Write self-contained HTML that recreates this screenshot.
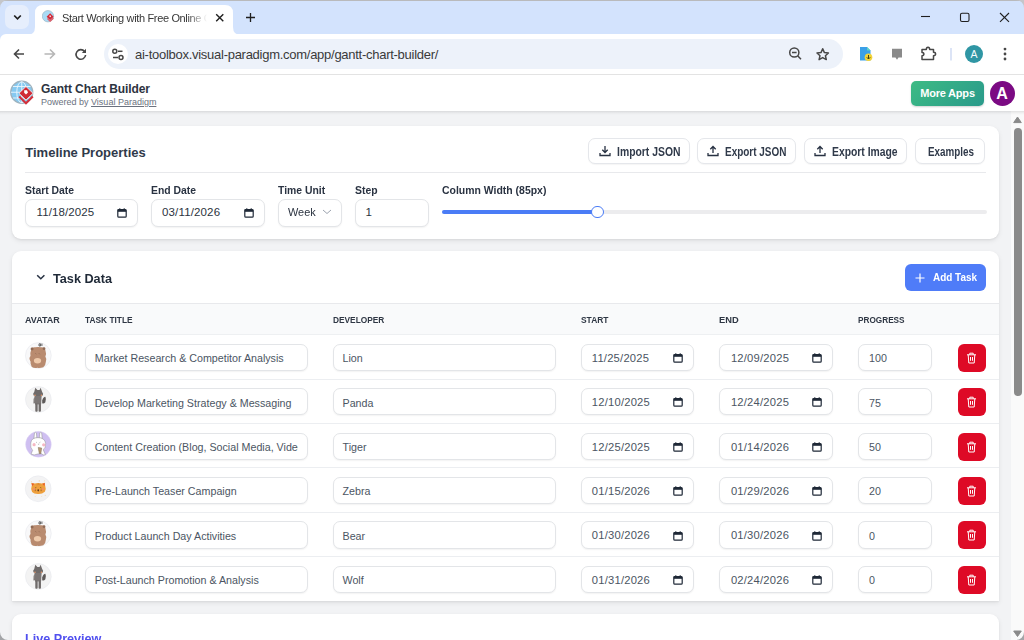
<!DOCTYPE html>
<html><head><meta charset="utf-8">
<style>
*{box-sizing:border-box;margin:0;padding:0}
html,body{width:1024px;height:640px;overflow:hidden;background:#fff;font-family:"Liberation Sans",sans-serif}
.abs{position:absolute}
#tabbar{position:absolute;left:0;top:0;width:1024px;height:35px;background:#d3e3fd;border-top:1px solid #b9babc}
#toolbar{position:absolute;left:0;top:34px;width:1024px;height:41px;background:#fff;border-bottom:1px solid #e3e3e3}
#omni{position:absolute;left:104px;top:39px;width:739px;height:30px;border-radius:15px;background:#edf2fa}
#apphdr{position:absolute;left:0;top:75px;width:1024px;height:36px;background:#fff}
#page{position:absolute;left:0;top:112px;width:1011px;height:528px;background:#f2f3f5;overflow:hidden}
#sb{position:absolute;left:1011px;top:112px;width:13px;height:528px;background:#fafafa}
.card{position:absolute;left:12px;width:987px;background:#fff;border-radius:9px;box-shadow:0 2px 5px rgba(0,0,0,.08),0 1px 2px rgba(0,0,0,.05)}
.lbl{position:absolute;font-size:11px;font-weight:bold;color:#1f2937}
.inp{position:absolute;height:28px;border:1px solid #e5e7eb;border-radius:6px;background:#fff;font-size:11.5px;color:#374151}
.btn{position:absolute;top:138px;height:26px;border:1px solid #e5e7eb;border-radius:7px;background:#fff;font-size:12px;font-weight:bold;color:#1f2937}
.th{position:absolute;top:316px;font-size:9.5px;font-weight:bold;color:#374151}
.row{position:absolute;left:12px;width:987px;border-top:1px solid #e5e7eb}
.ti{position:absolute;height:27px;border:1px solid #e5e7eb;border-radius:6px;background:#fff;font-size:10.5px;color:#4b5563}
</style></head>
<body>

<div id="tabbar"></div>
<div class="abs" style="left:5px;top:5px;width:24px;height:24px;border-radius:7px;background:#e6eefc"></div>
<svg class="abs" style="left:0;top:0" width="1024" height="75">
  <path d="M14.2 15.5 L17.5 18.8 L20.8 15.5" fill="none" stroke="#1f1f1f" stroke-width="1.7"/>
  <!-- tab shape -->
  <path d="M27 35 Q35 35 35 27 L35 13 Q35 5 43 5 L225 5 Q233 5 233 13 L233 27 Q233 35 241 35 Z" fill="#fff"/>
  <path d="M216.2 14.2 L223.3 21.3 M223.3 14.2 L216.2 21.3" stroke="#1f1f1f" stroke-width="1.4"/>
  <path d="M250.5 13 V22 M246 17.5 H255" stroke="#1f1f1f" stroke-width="1.3"/>
  <path d="M921 16.5 H930" stroke="#1f1f1f" stroke-width="1.1"/>
  <rect x="960.5" y="13.2" width="8.5" height="8.3" rx="1.5" fill="none" stroke="#1f1f1f" stroke-width="1.1"/>
  <path d="M1000 13 L1009 21.8 M1009 13 L1000 21.8" stroke="#1f1f1f" stroke-width="1.1"/>
</svg>
<svg class="abs" style="left:41.5px;top:10px" width="13" height="13" viewBox="0 0 24 24">
  <circle cx="11" cy="11.5" r="10.5" fill="#a9dbf5" stroke="#9db4c2" stroke-width="1.2"/>
  <path d="M10 15.5 L15 20.5 L21 15" fill="none" stroke="#e0606b" stroke-width="2.6"/>
  <path d="M15 6 L21.5 12.3 L15 18.5 L8.5 12.3 Z" fill="#d42a38"/>
  <path d="M13.7 10 H16 L16.6 12 L15 13.5 L13.7 12.2 Z" fill="#fff"/>
</svg>
<div class="abs" style="left:62px;top:11.5px;width:145px;height:16px;overflow:hidden;font-size:11px;letter-spacing:-0.35px;color:#363636;white-space:nowrap;-webkit-mask-image:linear-gradient(90deg,#000 125px,transparent 145px)">Start Working with Free Online Gantt</div>
<div id="toolbar"></div>
<div id="omni"></div>
<div class="abs" style="left:108px;top:44px;width:20px;height:20px;border-radius:10px;background:#fff"></div>
<svg class="abs" style="left:0;top:34px" width="1024" height="41">
  <path d="M24 20 H14.8 M19 15.5 L14.5 20 L19 24.5" fill="none" stroke="#474747" stroke-width="1.6"/>
  <path d="M44.5 20 H53.7 M50 15.5 L54.5 20 L50 24.5" fill="none" stroke="#b7b7b7" stroke-width="1.6"/>
  <path d="M84.6 17.5 A4.8 4.8 0 1 0 85.6 21" fill="none" stroke="#474747" stroke-width="1.6"/>
  <path d="M86 14.8 V19 H81.8 Z" fill="#474747"/>
  <g fill="none" stroke="#474747" stroke-width="1.5">
    <circle cx="114.8" cy="17.3" r="2"/><path d="M118 17.3 H122.5"/>
    <circle cx="121" cy="23.5" r="2"/><path d="M113 23.5 H118"/>
    <circle cx="794.3" cy="18.5" r="4.6"/><path d="M797.6 21.8 L801 25.3"/><path d="M792 18.5 H796.6"/>
    <path d="M822.7 14.8 L824.4 18.6 L828.4 19 L825.4 21.7 L826.3 25.6 L822.7 23.6 L819.1 25.6 L820 21.7 L817 19 L821 18.6 Z" stroke-linejoin="round"/>
    <path d="M922 15.5 H926.3 Q926.3 13.2 928 13.2 Q929.7 13.2 929.7 15.5 H933.5 V18.3 Q935.6 18.3 935.6 20 Q935.6 21.7 933.5 21.7 V25.5 H922 V21.8 Q923.9 21.8 923.9 20.1 Q923.9 18.4 922 18.4 Z" stroke-linejoin="round"/>
  </g>
  <path d="M951 14 V26.5" stroke="#c9d6f2" stroke-width="1.3"/>
  <path d="M892 14.7 H902 V23.5 H898.5 L897 25.7 L895.5 23.5 H892 Z" fill="#8a8a8a"/>
  <path d="M860 13 H867 L870.5 16.5 V26.5 H860 Z" fill="#3aa0e8"/>
  <path d="M867 13 L870.5 16.5 H867 Z" fill="#5fd3c4"/>
  <circle cx="868.5" cy="23.3" r="3.8" fill="#f2d43a"/>
  <path d="M868.5 21 V24.8 M866.8 23.3 L868.5 25 L870.2 23.3" stroke="#3d3a10" stroke-width="1" fill="none"/>
  <circle cx="974" cy="20" r="9" fill="#2f96a4"/>
  <text x="974" y="23.8" font-size="10.5" fill="#f4fbfc" text-anchor="middle" font-family="Liberation Sans">A</text>
  <circle cx="1005" cy="15.1" r="1.4" fill="#474747"/><circle cx="1005" cy="20" r="1.4" fill="#474747"/><circle cx="1005" cy="25" r="1.4" fill="#474747"/>
</svg>
<div class="abs" style="left:135px;top:46.6px;font-size:13px;letter-spacing:-0.27px;color:#3a3a3a;white-space:nowrap">ai-toolbox.visual-paradigm.com/app/gantt-chart-builder/</div>
<div id="apphdr"></div>
<svg class="abs" style="left:0;top:75px" width="40" height="36">
  <circle cx="21.75" cy="17.25" r="11" fill="#86c9f1" stroke="#9fb3bf" stroke-width="1.3"/>
  <g stroke="#eaf6fd" stroke-width="0.9" fill="none">
    <ellipse cx="21.75" cy="17.25" rx="5" ry="10.5"/>
    <path d="M11 17.25 H32.5 M13 11.5 H30.5 M13 23 H30.5 M21.75 6.5 V28"/>
  </g>
  <path d="M19.2 21.5 L26 28.2 L32.8 21.5" fill="none" stroke="#d2303c" stroke-width="2.2"/>
  <path d="M26 11.5 L33 18.3 L26 25 L19 18.3 Z" fill="#cf2a36" stroke="#fff" stroke-width="0.7"/>
  <path d="M24.2 15.2 H27 L28 17.5 L26 19.5 L24.2 17.8 Z" fill="#fff"/>
</svg>
<div class="abs" style="left:41px;top:81.6px;font-size:12px;font-weight:bold;color:#2d3340;white-space:nowrap;letter-spacing:-0.1px">Gantt Chart Builder</div>
<div class="abs" style="left:41px;top:96.5px;font-size:9px;color:#6b7280;white-space:nowrap">Powered by <span style="text-decoration:underline">Visual Paradigm</span></div>
<div class="abs" style="left:911px;top:81px;width:73px;height:25px;border-radius:5px;background:linear-gradient(135deg,#3dbb84,#2a9a8b);box-shadow:0 1px 2px rgba(0,0,0,.18);color:#fff;font-size:11px;font-weight:bold;line-height:25px;text-align:center;letter-spacing:-0.2px">More Apps</div>
<div class="abs" style="left:989.5px;top:80.7px;width:25px;height:25px;border-radius:50%;background:#7b0a83;color:#fff;font-size:16px;font-weight:bold;line-height:26px;text-align:center">A</div>
<div class="abs" style="left:0;top:111px;width:1011px;height:529px;background:#f2f3f5"></div>
<div class="abs" style="left:0;top:111px;width:1024px;height:4px;background:linear-gradient(rgba(0,0,0,.10),rgba(0,0,0,.035) 50%,rgba(0,0,0,0))"></div>
<div class="card" style="top:126px;height:113px"></div>
<div class="card" style="top:251px;height:350px;border-radius:9px 9px 0 0"></div>
<div class="card" style="top:614px;height:100px"></div>
<div class="abs" style="left:25.3px;top:145.24px;font-size:13px;line-height:normal;font-weight:bold;color:#303a4a;white-space:nowrap;">Timeline Properties</div>
<div class="abs" style="left:25px;top:172px;width:961px;height:1px;background:#e8e9ec"></div>
<div class="abs" style="left:588px;top:137.5px;width:102.0px;height:26.5px;border:1px solid #e5e7eb;border-radius:7px;background:#fff;box-shadow:0 1px 1px rgba(0,0,0,.04)"></div>
<div class="abs" style="left:696.6px;top:137.5px;width:99.4px;height:26.5px;border:1px solid #e5e7eb;border-radius:7px;background:#fff;box-shadow:0 1px 1px rgba(0,0,0,.04)"></div>
<div class="abs" style="left:803.5px;top:137.5px;width:103.9px;height:26.5px;border:1px solid #e5e7eb;border-radius:7px;background:#fff;box-shadow:0 1px 1px rgba(0,0,0,.04)"></div>
<div class="abs" style="left:914.6px;top:137.5px;width:70.6px;height:26.5px;border:1px solid #e5e7eb;border-radius:7px;background:#fff;box-shadow:0 1px 1px rgba(0,0,0,.04)"></div>
<div class="abs" style="left:616.5px;top:144.94px;font-size:12px;line-height:normal;font-weight:bold;color:#303a4a;white-space:nowrap;transform:scaleX(0.866);transform-origin:0 0;">Import JSON</div>
<div class="abs" style="left:725px;top:144.94px;font-size:12px;line-height:normal;font-weight:bold;color:#303a4a;white-space:nowrap;transform:scaleX(0.83);transform-origin:0 0;">Export JSON</div>
<div class="abs" style="left:832px;top:144.94px;font-size:12px;line-height:normal;font-weight:bold;color:#303a4a;white-space:nowrap;transform:scaleX(0.863);transform-origin:0 0;">Export Image</div>
<div class="abs" style="left:927.5px;top:144.94px;font-size:12px;line-height:normal;font-weight:bold;color:#303a4a;white-space:nowrap;transform:scaleX(0.82);transform-origin:0 0;">Examples</div>
<svg class="abs" style="left:598.5px;top:145px" width="12" height="12" viewBox="0 0 12 12"><path d="M6 1 V7.5 M3.3 4.8 L6 7.5 L8.7 4.8 M1 8 V10.5 H11 V8" fill="none" stroke="#273142" stroke-width="1.3"/></svg>
<svg class="abs" style="left:707px;top:145px" width="12" height="12" viewBox="0 0 12 12"><path d="M6 8 V1.5 M3.3 4.2 L6 1.5 L8.7 4.2 M1 8 V10.5 H11 V8" fill="none" stroke="#273142" stroke-width="1.3"/></svg>
<svg class="abs" style="left:814px;top:145px" width="12" height="12" viewBox="0 0 12 12"><path d="M6 8 V1.5 M3.3 4.2 L6 1.5 L8.7 4.2 M1 8 V10.5 H11 V8" fill="none" stroke="#273142" stroke-width="1.3"/></svg>
<div class="abs" style="left:25px;top:184.04px;font-size:11px;line-height:normal;font-weight:bold;color:#2a3342;white-space:nowrap;transform:scaleX(0.945);transform-origin:0 0;">Start Date</div>
<div class="abs" style="left:151.3px;top:184.04px;font-size:11px;line-height:normal;font-weight:bold;color:#2a3342;white-space:nowrap;transform:scaleX(0.945);transform-origin:0 0;">End Date</div>
<div class="abs" style="left:277.8px;top:184.04px;font-size:11px;line-height:normal;font-weight:bold;color:#2a3342;white-space:nowrap;transform:scaleX(0.945);transform-origin:0 0;">Time Unit</div>
<div class="abs" style="left:355.2px;top:184.04px;font-size:11px;line-height:normal;font-weight:bold;color:#2a3342;white-space:nowrap;transform:scaleX(0.945);transform-origin:0 0;">Step</div>
<div class="abs" style="left:442px;top:184.04px;font-size:11px;line-height:normal;font-weight:bold;color:#2a3342;white-space:nowrap;transform:scaleX(0.95);transform-origin:0 0;">Column Width (85px)</div>
<div class="abs" style="left:25.3px;top:198.8px;width:113.20px;height:27.80px;border:1px solid #e3e5e8;border-radius:7px;background:#fff;box-shadow:0 1px 1.5px rgba(0,0,0,.05)"></div>
<div class="abs" style="left:36.6px;top:206.19px;font-size:11.5px;line-height:normal;font-weight:normal;color:#2b3340;white-space:nowrap;letter-spacing:0.1px;">11/18/2025</div>
<svg class="abs" style="left:117px;top:207.5px" width="10" height="10" viewBox="0 0 10 10"><rect x="0.8" y="1.5" width="8.4" height="7.7" rx="1" fill="none" stroke="#1f2937" stroke-width="1.2"/><rect x="0.8" y="1.5" width="8.4" height="2.3" fill="#1f2937"/><path d="M2.8 0.2 V1.8 M7.2 0.2 V1.8" stroke="#1f2937" stroke-width="1.1"/></svg>
<div class="abs" style="left:151.1px;top:198.8px;width:114.30px;height:27.80px;border:1px solid #e3e5e8;border-radius:7px;background:#fff;box-shadow:0 1px 1.5px rgba(0,0,0,.05)"></div>
<div class="abs" style="left:162px;top:206.19px;font-size:11.5px;line-height:normal;font-weight:normal;color:#2b3340;white-space:nowrap;letter-spacing:0.15px;">03/11/2026</div>
<svg class="abs" style="left:243.5px;top:207.5px" width="10" height="10" viewBox="0 0 10 10"><rect x="0.8" y="1.5" width="8.4" height="7.7" rx="1" fill="none" stroke="#1f2937" stroke-width="1.2"/><rect x="0.8" y="1.5" width="8.4" height="2.3" fill="#1f2937"/><path d="M2.8 0.2 V1.8 M7.2 0.2 V1.8" stroke="#1f2937" stroke-width="1.1"/></svg>
<div class="abs" style="left:277.7px;top:198.8px;width:64.50px;height:27.80px;border:1px solid #e3e5e8;border-radius:7px;background:#fff;box-shadow:0 1px 1.5px rgba(0,0,0,.05)"></div>
<div class="abs" style="left:288px;top:206.19px;font-size:11.5px;line-height:normal;font-weight:normal;color:#2b3340;white-space:nowrap;transform:scaleX(0.95);transform-origin:0 0;">Week</div>
<svg class="abs" style="left:322px;top:209px" width="10" height="6"><path d="M1 1 L5 4.5 L9 1" fill="none" stroke="#9ca3af" stroke-width="1"/></svg>
<div class="abs" style="left:355.4px;top:198.8px;width:74.10px;height:27.80px;border:1px solid #e3e5e8;border-radius:7px;background:#fff;box-shadow:0 1px 1.5px rgba(0,0,0,.05)"></div>
<div class="abs" style="left:365.6px;top:206.19px;font-size:11.5px;line-height:normal;font-weight:normal;color:#2b3340;white-space:nowrap;">1</div>
<div class="abs" style="left:441.5px;top:210.3px;width:545px;height:4px;border-radius:2px;background:#ececee"></div>
<div class="abs" style="left:441.5px;top:210.3px;width:156px;height:4px;border-radius:2px;background:#4a7cf6"></div>
<div class="abs" style="left:591.3px;top:206.1px;width:12.4px;height:12.4px;border-radius:50%;background:#fff;border:1.8px solid #4a7cf6"></div>
<svg class="abs" style="left:36px;top:274px" width="10" height="7"><path d="M1.2 1.2 L4.8 4.8 L8.4 1.2" fill="none" stroke="#273142" stroke-width="1.5"/></svg>
<div class="abs" style="left:53.1px;top:270.74px;font-size:13px;line-height:normal;font-weight:bold;color:#1f2937;white-space:nowrap;transform:scaleX(0.975);transform-origin:0 0;">Task Data</div>
<div class="abs" style="left:905.4px;top:264px;width:80.8px;height:27px;border-radius:6px;background:#4f7cf8"></div>
<svg class="abs" style="left:915px;top:272.5px" width="10" height="10"><path d="M5 0.5 V9.5 M0.5 5 H9.5" stroke="#fff" stroke-width="1.2"/></svg>
<div class="abs" style="left:933.2px;top:271.09px;font-size:11.5px;line-height:normal;font-weight:bold;color:#fff;white-space:nowrap;transform:scaleX(0.865);transform-origin:0 0;">Add Task</div>
<div class="abs" style="left:12px;top:303px;width:987px;height:31.5px;background:#f9fafb;border-top:1px solid #e8e9ec;border-bottom:1px solid #eef0f2"></div>
<div class="abs" style="left:25px;top:314.20px;font-size:9.5px;line-height:normal;font-weight:bold;color:#2f3744;white-space:nowrap;transform:scaleX(0.946);transform-origin:0 0;">AVATAR</div>
<div class="abs" style="left:85.2px;top:314.20px;font-size:9.5px;line-height:normal;font-weight:bold;color:#2f3744;white-space:nowrap;transform:scaleX(0.878);transform-origin:0 0;">TASK TITLE</div>
<div class="abs" style="left:332.5px;top:314.20px;font-size:9.5px;line-height:normal;font-weight:bold;color:#2f3744;white-space:nowrap;transform:scaleX(0.875);transform-origin:0 0;">DEVELOPER</div>
<div class="abs" style="left:580.5px;top:314.20px;font-size:9.5px;line-height:normal;font-weight:bold;color:#2f3744;white-space:nowrap;transform:scaleX(0.887);transform-origin:0 0;">START</div>
<div class="abs" style="left:719.3px;top:314.20px;font-size:9.5px;line-height:normal;font-weight:bold;color:#2f3744;white-space:nowrap;transform:scaleX(0.98);transform-origin:0 0;">END</div>
<div class="abs" style="left:858.1px;top:314.20px;font-size:9.5px;line-height:normal;font-weight:bold;color:#2f3744;white-space:nowrap;transform:scaleX(0.865);transform-origin:0 0;">PROGRESS</div>
<svg class="abs" style="left:22px;top:338.20px" width="34" height="34" viewBox="0 0 640 640"><circle cx="308" cy="330" r="243" fill="#f8f8f9" stroke="#e2e4e9" stroke-width="9"/>
<path d="M175 215 Q180 170 250 175 Q300 165 360 175 Q430 170 440 230 Q465 300 440 350 Q470 400 450 440 Q445 520 400 550 Q330 575 290 560 Q230 575 185 545 Q155 500 160 440 Q120 380 160 340 Q150 270 175 215 Z" fill="#b98b6f"/>
<circle cx="190" cy="205" r="28" fill="#8f6a55"/><circle cx="415" cy="200" r="26" fill="#8f6a55"/>
<ellipse cx="292" cy="430" rx="68" ry="52" fill="#efcaab"/>
<path d="M255 290 L268 305 M320 290 L333 305" stroke="#6b4c3b" stroke-width="10"/>
<path d="M320 110 H350 V150 H320 Z M375 105 V150" stroke="#333" stroke-width="14" fill="none"/></svg>
<div class="abs" style="left:84.5px;top:343.60px;width:223px;height:27.30px;border:1px solid #e3e5e8;border-radius:7px;background:#fff;box-shadow:0 1px 1.5px rgba(0,0,0,.05);overflow:hidden"></div>
<div class="abs" style="left:85.5px;top:343.60px;width:212px;height:27.30px;overflow:hidden"><div class="abs" style="left:9.3px;top:8.52px;font-size:10.7px;color:#4b5563;white-space:nowrap">Market Research &amp; Competitor Analysis</div></div>
<div class="abs" style="left:332.5px;top:343.6px;width:223.10px;height:27.30px;border:1px solid #e3e5e8;border-radius:7px;background:#fff;box-shadow:0 1px 1.5px rgba(0,0,0,.05)"></div>
<div class="abs" style="left:342.5px;top:352.12px;font-size:10.7px;line-height:normal;font-weight:normal;color:#4b5563;white-space:nowrap;">Lion</div>
<div class="abs" style="left:580.5px;top:343.6px;width:113.40px;height:27.30px;border:1px solid #e3e5e8;border-radius:7px;background:#fff;box-shadow:0 1px 1.5px rgba(0,0,0,.05)"></div>
<div class="abs" style="left:591.8px;top:351.66px;font-size:11.2px;line-height:normal;font-weight:normal;color:#4b5563;white-space:nowrap;letter-spacing:0.22px;">11/25/2025</div>
<svg class="abs" style="left:672.5px;top:352.90000000000003px" width="10" height="10" viewBox="0 0 10 10"><rect x="0.8" y="1.5" width="8.4" height="7.7" rx="1" fill="none" stroke="#1f2937" stroke-width="1.2"/><rect x="0.8" y="1.5" width="8.4" height="2.3" fill="#1f2937"/><path d="M2.8 0.2 V1.8 M7.2 0.2 V1.8" stroke="#1f2937" stroke-width="1.1"/></svg>
<div class="abs" style="left:719.1px;top:343.6px;width:114.20px;height:27.30px;border:1px solid #e3e5e8;border-radius:7px;background:#fff;box-shadow:0 1px 1.5px rgba(0,0,0,.05)"></div>
<div class="abs" style="left:730.9px;top:351.66px;font-size:11.2px;line-height:normal;font-weight:normal;color:#4b5563;white-space:nowrap;letter-spacing:0.22px;">12/09/2025</div>
<svg class="abs" style="left:812px;top:352.90000000000003px" width="10" height="10" viewBox="0 0 10 10"><rect x="0.8" y="1.5" width="8.4" height="7.7" rx="1" fill="none" stroke="#1f2937" stroke-width="1.2"/><rect x="0.8" y="1.5" width="8.4" height="2.3" fill="#1f2937"/><path d="M2.8 0.2 V1.8 M7.2 0.2 V1.8" stroke="#1f2937" stroke-width="1.1"/></svg>
<div class="abs" style="left:858.1px;top:343.6px;width:73.90px;height:27.30px;border:1px solid #e3e5e8;border-radius:7px;background:#fff;box-shadow:0 1px 1.5px rgba(0,0,0,.05)"></div>
<div class="abs" style="left:869px;top:352.12px;font-size:10.7px;line-height:normal;font-weight:normal;color:#4b5563;white-space:nowrap;">100</div>
<div class="abs" style="left:957.5px;top:343.60px;width:28.3px;height:28px;border-radius:6px;background:#de0a26"></div>
<svg class="abs" style="left:966px;top:351.60px" width="11" height="12" viewBox="0 0 11 12"><path d="M1 2.8 H10 M3.8 2.8 V1.2 H7.2 V2.8 M2.2 2.8 L2.8 11 H8.2 L8.8 2.8 M4.5 5 V8.8 M6.5 5 V8.8" fill="none" stroke="#fff" stroke-width="1"/></svg>
<div class="abs" style="left:12px;top:378.55px;width:987px;height:1px;background:#eceef1"></div>
<svg class="abs" style="left:22px;top:382.65px" width="34" height="34" viewBox="0 0 640 640"><circle cx="308" cy="310" r="243" fill="#f3f3f3" stroke="#e4e6eb" stroke-width="9"/>
<path d="M230 170 L250 90 L290 130 L330 130 L350 90 L380 170 Q410 200 390 235 Q350 255 305 250 Q245 255 215 230 Q200 195 230 170 Z" fill="#6f6b6a"/>
<circle cx="245" cy="232" r="14" fill="#e99566"/><circle cx="365" cy="232" r="14" fill="#e99566"/>
<path d="M235 245 H370 L360 400 H245 Z" fill="#7b7675"/>
<path d="M218 300 L240 255 L245 380 L215 385 Z" fill="#7b7675"/>
<rect x="250" y="380" width="45" height="160" rx="18" fill="#6f6b6a"/>
<rect x="312" y="380" width="45" height="160" rx="18" fill="#6f6b6a"/>
<path d="M380 330 Q400 260 440 260 Q460 300 440 360 Q410 400 380 380 Z" fill="#5e5a59"/></svg>
<div class="abs" style="left:84.5px;top:388.05px;width:223px;height:27.30px;border:1px solid #e3e5e8;border-radius:7px;background:#fff;box-shadow:0 1px 1.5px rgba(0,0,0,.05);overflow:hidden"></div>
<div class="abs" style="left:85.5px;top:388.05px;width:212px;height:27.30px;overflow:hidden"><div class="abs" style="left:9.3px;top:8.52px;font-size:10.7px;color:#4b5563;white-space:nowrap">Develop Marketing Strategy &amp; Messaging</div></div>
<div class="abs" style="left:332.5px;top:388.05px;width:223.10px;height:27.30px;border:1px solid #e3e5e8;border-radius:7px;background:#fff;box-shadow:0 1px 1.5px rgba(0,0,0,.05)"></div>
<div class="abs" style="left:342.5px;top:396.57px;font-size:10.7px;line-height:normal;font-weight:normal;color:#4b5563;white-space:nowrap;">Panda</div>
<div class="abs" style="left:580.5px;top:388.05px;width:113.40px;height:27.30px;border:1px solid #e3e5e8;border-radius:7px;background:#fff;box-shadow:0 1px 1.5px rgba(0,0,0,.05)"></div>
<div class="abs" style="left:591.8px;top:396.11px;font-size:11.2px;line-height:normal;font-weight:normal;color:#4b5563;white-space:nowrap;letter-spacing:0.22px;">12/10/2025</div>
<svg class="abs" style="left:672.5px;top:397.35px" width="10" height="10" viewBox="0 0 10 10"><rect x="0.8" y="1.5" width="8.4" height="7.7" rx="1" fill="none" stroke="#1f2937" stroke-width="1.2"/><rect x="0.8" y="1.5" width="8.4" height="2.3" fill="#1f2937"/><path d="M2.8 0.2 V1.8 M7.2 0.2 V1.8" stroke="#1f2937" stroke-width="1.1"/></svg>
<div class="abs" style="left:719.1px;top:388.05px;width:114.20px;height:27.30px;border:1px solid #e3e5e8;border-radius:7px;background:#fff;box-shadow:0 1px 1.5px rgba(0,0,0,.05)"></div>
<div class="abs" style="left:730.9px;top:396.11px;font-size:11.2px;line-height:normal;font-weight:normal;color:#4b5563;white-space:nowrap;letter-spacing:0.22px;">12/24/2025</div>
<svg class="abs" style="left:812px;top:397.35px" width="10" height="10" viewBox="0 0 10 10"><rect x="0.8" y="1.5" width="8.4" height="7.7" rx="1" fill="none" stroke="#1f2937" stroke-width="1.2"/><rect x="0.8" y="1.5" width="8.4" height="2.3" fill="#1f2937"/><path d="M2.8 0.2 V1.8 M7.2 0.2 V1.8" stroke="#1f2937" stroke-width="1.1"/></svg>
<div class="abs" style="left:858.1px;top:388.05px;width:73.90px;height:27.30px;border:1px solid #e3e5e8;border-radius:7px;background:#fff;box-shadow:0 1px 1.5px rgba(0,0,0,.05)"></div>
<div class="abs" style="left:869px;top:396.57px;font-size:10.7px;line-height:normal;font-weight:normal;color:#4b5563;white-space:nowrap;">75</div>
<div class="abs" style="left:957.5px;top:388.05px;width:28.3px;height:28px;border-radius:6px;background:#de0a26"></div>
<svg class="abs" style="left:966px;top:396.05px" width="11" height="12" viewBox="0 0 11 12"><path d="M1 2.8 H10 M3.8 2.8 V1.2 H7.2 V2.8 M2.2 2.8 L2.8 11 H8.2 L8.8 2.8 M4.5 5 V8.8 M6.5 5 V8.8" fill="none" stroke="#fff" stroke-width="1"/></svg>
<div class="abs" style="left:12px;top:423.00px;width:987px;height:1px;background:#eceef1"></div>
<svg class="abs" style="left:22px;top:427.10px" width="34" height="34" viewBox="0 0 640 640"><circle cx="310" cy="325" r="243" fill="#cfbff1" stroke="#e6e0f5" stroke-width="6"/>
<path d="M225 215 L235 110 Q255 90 270 110 L280 210 Z M325 210 L335 110 Q350 90 370 110 L380 215 Z" fill="#fff" stroke="#8c8c8c" stroke-width="9"/>
<path d="M165 300 Q175 200 300 200 Q430 200 445 310 Q450 390 400 430 L440 520 Q400 540 360 500 L290 510 Q230 540 170 510 Q190 460 200 440 Q150 390 165 300 Z" fill="#fff" stroke="#8c8c8c" stroke-width="9"/>
<circle cx="228" cy="332" r="30" fill="#f6b8c3"/><circle cx="408" cy="335" r="30" fill="#f6b8c3"/>
<path d="M265 285 l15 8 M345 285 l-15 8 M300 320 q12 10 24 0" stroke="#555" stroke-width="8" fill="none"/>
<path d="M305 385 L370 395 L355 500 L325 500 Z" fill="#b89a72" stroke="#6d5b45" stroke-width="8"/></svg>
<div class="abs" style="left:84.5px;top:432.50px;width:223px;height:27.30px;border:1px solid #e3e5e8;border-radius:7px;background:#fff;box-shadow:0 1px 1.5px rgba(0,0,0,.05);overflow:hidden"></div>
<div class="abs" style="left:85.5px;top:432.50px;width:212px;height:27.30px;overflow:hidden"><div class="abs" style="left:9.3px;top:8.52px;font-size:10.7px;color:#4b5563;white-space:nowrap">Content Creation (Blog, Social Media, Videos)</div></div>
<div class="abs" style="left:332.5px;top:432.5px;width:223.10px;height:27.30px;border:1px solid #e3e5e8;border-radius:7px;background:#fff;box-shadow:0 1px 1.5px rgba(0,0,0,.05)"></div>
<div class="abs" style="left:342.5px;top:441.02px;font-size:10.7px;line-height:normal;font-weight:normal;color:#4b5563;white-space:nowrap;">Tiger</div>
<div class="abs" style="left:580.5px;top:432.5px;width:113.40px;height:27.30px;border:1px solid #e3e5e8;border-radius:7px;background:#fff;box-shadow:0 1px 1.5px rgba(0,0,0,.05)"></div>
<div class="abs" style="left:591.8px;top:440.56px;font-size:11.2px;line-height:normal;font-weight:normal;color:#4b5563;white-space:nowrap;letter-spacing:0.22px;">12/25/2025</div>
<svg class="abs" style="left:672.5px;top:441.8px" width="10" height="10" viewBox="0 0 10 10"><rect x="0.8" y="1.5" width="8.4" height="7.7" rx="1" fill="none" stroke="#1f2937" stroke-width="1.2"/><rect x="0.8" y="1.5" width="8.4" height="2.3" fill="#1f2937"/><path d="M2.8 0.2 V1.8 M7.2 0.2 V1.8" stroke="#1f2937" stroke-width="1.1"/></svg>
<div class="abs" style="left:719.1px;top:432.5px;width:114.20px;height:27.30px;border:1px solid #e3e5e8;border-radius:7px;background:#fff;box-shadow:0 1px 1.5px rgba(0,0,0,.05)"></div>
<div class="abs" style="left:730.9px;top:440.56px;font-size:11.2px;line-height:normal;font-weight:normal;color:#4b5563;white-space:nowrap;letter-spacing:0.22px;">01/14/2026</div>
<svg class="abs" style="left:812px;top:441.8px" width="10" height="10" viewBox="0 0 10 10"><rect x="0.8" y="1.5" width="8.4" height="7.7" rx="1" fill="none" stroke="#1f2937" stroke-width="1.2"/><rect x="0.8" y="1.5" width="8.4" height="2.3" fill="#1f2937"/><path d="M2.8 0.2 V1.8 M7.2 0.2 V1.8" stroke="#1f2937" stroke-width="1.1"/></svg>
<div class="abs" style="left:858.1px;top:432.5px;width:73.90px;height:27.30px;border:1px solid #e3e5e8;border-radius:7px;background:#fff;box-shadow:0 1px 1.5px rgba(0,0,0,.05)"></div>
<div class="abs" style="left:869px;top:441.02px;font-size:10.7px;line-height:normal;font-weight:normal;color:#4b5563;white-space:nowrap;">50</div>
<div class="abs" style="left:957.5px;top:432.50px;width:28.3px;height:28px;border-radius:6px;background:#de0a26"></div>
<svg class="abs" style="left:966px;top:440.50px" width="11" height="12" viewBox="0 0 11 12"><path d="M1 2.8 H10 M3.8 2.8 V1.2 H7.2 V2.8 M2.2 2.8 L2.8 11 H8.2 L8.8 2.8 M4.5 5 V8.8 M6.5 5 V8.8" fill="none" stroke="#fff" stroke-width="1"/></svg>
<div class="abs" style="left:12px;top:467.45px;width:987px;height:1px;background:#eceef1"></div>
<svg class="abs" style="left:22px;top:471.55px" width="34" height="34" viewBox="0 0 640 640"><circle cx="305" cy="315" r="243" fill="#f3f3f4" stroke="#e4e6eb" stroke-width="9"/>
<path d="M185 250 L175 200 L240 215 Q305 195 370 215 L430 200 L435 255 Q460 320 430 370 Q380 415 305 412 Q225 415 190 375 Q160 320 185 250 Z" fill="#efa03c"/>
<path d="M180 215 L230 220 L195 265 Z M432 212 L385 222 L420 265 Z" fill="#e8542e"/>
<path d="M285 215 V250 M310 210 V245 M335 215 V250" stroke="#c9782a" stroke-width="9"/>
<path d="M245 300 L270 290 M340 290 L365 300 M250 330 V360 M360 330 V360" stroke="#5a3a1e" stroke-width="10"/>
<ellipse cx="305" cy="345" rx="14" ry="20" fill="#4a2b16"/>
<circle cx="225" cy="325" r="20" fill="#f28b6b"/><circle cx="395" cy="325" r="20" fill="#f28b6b"/>
<path d="M175 175 l10 10 M325 155 v25 M425 160 l-5 15 M250 460 l10 -10 M370 460 l5 -10 M430 440 h15" stroke="#f1b24a" stroke-width="9"/></svg>
<div class="abs" style="left:84.5px;top:476.95px;width:223px;height:27.30px;border:1px solid #e3e5e8;border-radius:7px;background:#fff;box-shadow:0 1px 1.5px rgba(0,0,0,.05);overflow:hidden"></div>
<div class="abs" style="left:85.5px;top:476.95px;width:212px;height:27.30px;overflow:hidden"><div class="abs" style="left:9.3px;top:8.52px;font-size:10.7px;color:#4b5563;white-space:nowrap">Pre-Launch Teaser Campaign</div></div>
<div class="abs" style="left:332.5px;top:476.95000000000005px;width:223.10px;height:27.30px;border:1px solid #e3e5e8;border-radius:7px;background:#fff;box-shadow:0 1px 1.5px rgba(0,0,0,.05)"></div>
<div class="abs" style="left:342.5px;top:485.47px;font-size:10.7px;line-height:normal;font-weight:normal;color:#4b5563;white-space:nowrap;">Zebra</div>
<div class="abs" style="left:580.5px;top:476.95000000000005px;width:113.40px;height:27.30px;border:1px solid #e3e5e8;border-radius:7px;background:#fff;box-shadow:0 1px 1.5px rgba(0,0,0,.05)"></div>
<div class="abs" style="left:591.8px;top:485.01px;font-size:11.2px;line-height:normal;font-weight:normal;color:#4b5563;white-space:nowrap;letter-spacing:0.22px;">01/15/2026</div>
<svg class="abs" style="left:672.5px;top:486.25000000000006px" width="10" height="10" viewBox="0 0 10 10"><rect x="0.8" y="1.5" width="8.4" height="7.7" rx="1" fill="none" stroke="#1f2937" stroke-width="1.2"/><rect x="0.8" y="1.5" width="8.4" height="2.3" fill="#1f2937"/><path d="M2.8 0.2 V1.8 M7.2 0.2 V1.8" stroke="#1f2937" stroke-width="1.1"/></svg>
<div class="abs" style="left:719.1px;top:476.95000000000005px;width:114.20px;height:27.30px;border:1px solid #e3e5e8;border-radius:7px;background:#fff;box-shadow:0 1px 1.5px rgba(0,0,0,.05)"></div>
<div class="abs" style="left:730.9px;top:485.01px;font-size:11.2px;line-height:normal;font-weight:normal;color:#4b5563;white-space:nowrap;letter-spacing:0.22px;">01/29/2026</div>
<svg class="abs" style="left:812px;top:486.25000000000006px" width="10" height="10" viewBox="0 0 10 10"><rect x="0.8" y="1.5" width="8.4" height="7.7" rx="1" fill="none" stroke="#1f2937" stroke-width="1.2"/><rect x="0.8" y="1.5" width="8.4" height="2.3" fill="#1f2937"/><path d="M2.8 0.2 V1.8 M7.2 0.2 V1.8" stroke="#1f2937" stroke-width="1.1"/></svg>
<div class="abs" style="left:858.1px;top:476.95000000000005px;width:73.90px;height:27.30px;border:1px solid #e3e5e8;border-radius:7px;background:#fff;box-shadow:0 1px 1.5px rgba(0,0,0,.05)"></div>
<div class="abs" style="left:869px;top:485.47px;font-size:10.7px;line-height:normal;font-weight:normal;color:#4b5563;white-space:nowrap;">20</div>
<div class="abs" style="left:957.5px;top:476.95px;width:28.3px;height:28px;border-radius:6px;background:#de0a26"></div>
<svg class="abs" style="left:966px;top:484.95px" width="11" height="12" viewBox="0 0 11 12"><path d="M1 2.8 H10 M3.8 2.8 V1.2 H7.2 V2.8 M2.2 2.8 L2.8 11 H8.2 L8.8 2.8 M4.5 5 V8.8 M6.5 5 V8.8" fill="none" stroke="#fff" stroke-width="1"/></svg>
<div class="abs" style="left:12px;top:511.90px;width:987px;height:1px;background:#eceef1"></div>
<svg class="abs" style="left:22px;top:516.00px" width="34" height="34" viewBox="0 0 640 640"><circle cx="308" cy="330" r="243" fill="#f8f8f9" stroke="#e2e4e9" stroke-width="9"/>
<path d="M175 215 Q180 170 250 175 Q300 165 360 175 Q430 170 440 230 Q465 300 440 350 Q470 400 450 440 Q445 520 400 550 Q330 575 290 560 Q230 575 185 545 Q155 500 160 440 Q120 380 160 340 Q150 270 175 215 Z" fill="#b98b6f"/>
<circle cx="190" cy="205" r="28" fill="#8f6a55"/><circle cx="415" cy="200" r="26" fill="#8f6a55"/>
<ellipse cx="292" cy="430" rx="68" ry="52" fill="#efcaab"/>
<path d="M255 290 L268 305 M320 290 L333 305" stroke="#6b4c3b" stroke-width="10"/>
<path d="M320 110 H350 V150 H320 Z M375 105 V150" stroke="#333" stroke-width="14" fill="none"/></svg>
<div class="abs" style="left:84.5px;top:521.40px;width:223px;height:27.30px;border:1px solid #e3e5e8;border-radius:7px;background:#fff;box-shadow:0 1px 1.5px rgba(0,0,0,.05);overflow:hidden"></div>
<div class="abs" style="left:85.5px;top:521.40px;width:212px;height:27.30px;overflow:hidden"><div class="abs" style="left:9.3px;top:8.52px;font-size:10.7px;color:#4b5563;white-space:nowrap">Product Launch Day Activities</div></div>
<div class="abs" style="left:332.5px;top:521.4000000000001px;width:223.10px;height:27.30px;border:1px solid #e3e5e8;border-radius:7px;background:#fff;box-shadow:0 1px 1.5px rgba(0,0,0,.05)"></div>
<div class="abs" style="left:342.5px;top:529.92px;font-size:10.7px;line-height:normal;font-weight:normal;color:#4b5563;white-space:nowrap;">Bear</div>
<div class="abs" style="left:580.5px;top:521.4000000000001px;width:113.40px;height:27.30px;border:1px solid #e3e5e8;border-radius:7px;background:#fff;box-shadow:0 1px 1.5px rgba(0,0,0,.05)"></div>
<div class="abs" style="left:591.8px;top:529.46px;font-size:11.2px;line-height:normal;font-weight:normal;color:#4b5563;white-space:nowrap;letter-spacing:0.22px;">01/30/2026</div>
<svg class="abs" style="left:672.5px;top:530.7px" width="10" height="10" viewBox="0 0 10 10"><rect x="0.8" y="1.5" width="8.4" height="7.7" rx="1" fill="none" stroke="#1f2937" stroke-width="1.2"/><rect x="0.8" y="1.5" width="8.4" height="2.3" fill="#1f2937"/><path d="M2.8 0.2 V1.8 M7.2 0.2 V1.8" stroke="#1f2937" stroke-width="1.1"/></svg>
<div class="abs" style="left:719.1px;top:521.4000000000001px;width:114.20px;height:27.30px;border:1px solid #e3e5e8;border-radius:7px;background:#fff;box-shadow:0 1px 1.5px rgba(0,0,0,.05)"></div>
<div class="abs" style="left:730.9px;top:529.46px;font-size:11.2px;line-height:normal;font-weight:normal;color:#4b5563;white-space:nowrap;letter-spacing:0.22px;">01/30/2026</div>
<svg class="abs" style="left:812px;top:530.7px" width="10" height="10" viewBox="0 0 10 10"><rect x="0.8" y="1.5" width="8.4" height="7.7" rx="1" fill="none" stroke="#1f2937" stroke-width="1.2"/><rect x="0.8" y="1.5" width="8.4" height="2.3" fill="#1f2937"/><path d="M2.8 0.2 V1.8 M7.2 0.2 V1.8" stroke="#1f2937" stroke-width="1.1"/></svg>
<div class="abs" style="left:858.1px;top:521.4000000000001px;width:73.90px;height:27.30px;border:1px solid #e3e5e8;border-radius:7px;background:#fff;box-shadow:0 1px 1.5px rgba(0,0,0,.05)"></div>
<div class="abs" style="left:869px;top:529.92px;font-size:10.7px;line-height:normal;font-weight:normal;color:#4b5563;white-space:nowrap;">0</div>
<div class="abs" style="left:957.5px;top:521.40px;width:28.3px;height:28px;border-radius:6px;background:#de0a26"></div>
<svg class="abs" style="left:966px;top:529.40px" width="11" height="12" viewBox="0 0 11 12"><path d="M1 2.8 H10 M3.8 2.8 V1.2 H7.2 V2.8 M2.2 2.8 L2.8 11 H8.2 L8.8 2.8 M4.5 5 V8.8 M6.5 5 V8.8" fill="none" stroke="#fff" stroke-width="1"/></svg>
<div class="abs" style="left:12px;top:556.35px;width:987px;height:1px;background:#eceef1"></div>
<svg class="abs" style="left:22px;top:560.45px" width="34" height="34" viewBox="0 0 640 640"><circle cx="308" cy="310" r="243" fill="#f3f3f3" stroke="#e4e6eb" stroke-width="9"/>
<path d="M230 170 L250 90 L290 130 L330 130 L350 90 L380 170 Q410 200 390 235 Q350 255 305 250 Q245 255 215 230 Q200 195 230 170 Z" fill="#6f6b6a"/>
<circle cx="245" cy="232" r="14" fill="#e99566"/><circle cx="365" cy="232" r="14" fill="#e99566"/>
<path d="M235 245 H370 L360 400 H245 Z" fill="#7b7675"/>
<path d="M218 300 L240 255 L245 380 L215 385 Z" fill="#7b7675"/>
<rect x="250" y="380" width="45" height="160" rx="18" fill="#6f6b6a"/>
<rect x="312" y="380" width="45" height="160" rx="18" fill="#6f6b6a"/>
<path d="M380 330 Q400 260 440 260 Q460 300 440 360 Q410 400 380 380 Z" fill="#5e5a59"/></svg>
<div class="abs" style="left:84.5px;top:565.85px;width:223px;height:27.30px;border:1px solid #e3e5e8;border-radius:7px;background:#fff;box-shadow:0 1px 1.5px rgba(0,0,0,.05);overflow:hidden"></div>
<div class="abs" style="left:85.5px;top:565.85px;width:212px;height:27.30px;overflow:hidden"><div class="abs" style="left:9.3px;top:8.52px;font-size:10.7px;color:#4b5563;white-space:nowrap">Post-Launch Promotion &amp; Analysis</div></div>
<div class="abs" style="left:332.5px;top:565.85px;width:223.10px;height:27.30px;border:1px solid #e3e5e8;border-radius:7px;background:#fff;box-shadow:0 1px 1.5px rgba(0,0,0,.05)"></div>
<div class="abs" style="left:342.5px;top:574.37px;font-size:10.7px;line-height:normal;font-weight:normal;color:#4b5563;white-space:nowrap;">Wolf</div>
<div class="abs" style="left:580.5px;top:565.85px;width:113.40px;height:27.30px;border:1px solid #e3e5e8;border-radius:7px;background:#fff;box-shadow:0 1px 1.5px rgba(0,0,0,.05)"></div>
<div class="abs" style="left:591.8px;top:573.91px;font-size:11.2px;line-height:normal;font-weight:normal;color:#4b5563;white-space:nowrap;letter-spacing:0.22px;">01/31/2026</div>
<svg class="abs" style="left:672.5px;top:575.15px" width="10" height="10" viewBox="0 0 10 10"><rect x="0.8" y="1.5" width="8.4" height="7.7" rx="1" fill="none" stroke="#1f2937" stroke-width="1.2"/><rect x="0.8" y="1.5" width="8.4" height="2.3" fill="#1f2937"/><path d="M2.8 0.2 V1.8 M7.2 0.2 V1.8" stroke="#1f2937" stroke-width="1.1"/></svg>
<div class="abs" style="left:719.1px;top:565.85px;width:114.20px;height:27.30px;border:1px solid #e3e5e8;border-radius:7px;background:#fff;box-shadow:0 1px 1.5px rgba(0,0,0,.05)"></div>
<div class="abs" style="left:730.9px;top:573.91px;font-size:11.2px;line-height:normal;font-weight:normal;color:#4b5563;white-space:nowrap;letter-spacing:0.22px;">02/24/2026</div>
<svg class="abs" style="left:812px;top:575.15px" width="10" height="10" viewBox="0 0 10 10"><rect x="0.8" y="1.5" width="8.4" height="7.7" rx="1" fill="none" stroke="#1f2937" stroke-width="1.2"/><rect x="0.8" y="1.5" width="8.4" height="2.3" fill="#1f2937"/><path d="M2.8 0.2 V1.8 M7.2 0.2 V1.8" stroke="#1f2937" stroke-width="1.1"/></svg>
<div class="abs" style="left:858.1px;top:565.85px;width:73.90px;height:27.30px;border:1px solid #e3e5e8;border-radius:7px;background:#fff;box-shadow:0 1px 1.5px rgba(0,0,0,.05)"></div>
<div class="abs" style="left:869px;top:574.37px;font-size:10.7px;line-height:normal;font-weight:normal;color:#4b5563;white-space:nowrap;">0</div>
<div class="abs" style="left:957.5px;top:565.85px;width:28.3px;height:28px;border-radius:6px;background:#de0a26"></div>
<svg class="abs" style="left:966px;top:573.85px" width="11" height="12" viewBox="0 0 11 12"><path d="M1 2.8 H10 M3.8 2.8 V1.2 H7.2 V2.8 M2.2 2.8 L2.8 11 H8.2 L8.8 2.8 M4.5 5 V8.8 M6.5 5 V8.8" fill="none" stroke="#fff" stroke-width="1"/></svg>
<div class="abs" style="left:25.3px;top:630.63px;font-size:13px;line-height:normal;font-weight:bold;color:#5150ef;white-space:nowrap;transform:scaleX(0.97);transform-origin:0 0;">Live Preview</div>
<div class="abs" style="left:1011px;top:111px;width:13px;height:529px;background:#fafafa"></div>
<svg class="abs" style="left:1011px;top:112px" width="13" height="528"><path d="M2.7 10.6 L6.5 5 L10.3 10.6 Z" fill="#8a8a8a" stroke="#8a8a8a" stroke-width="1" stroke-linejoin="round"/><path d="M2.7 519 L6.5 524.5 L10.3 519 Z" fill="#8a8a8a" stroke="#8a8a8a" stroke-width="1" stroke-linejoin="round"/></svg>
<div class="abs" style="left:1014px;top:128px;width:7.5px;height:268px;border-radius:4px;background:#8a8a8a"></div>
<div class="abs" style="left:1011px;top:111px;width:13px;height:4px;background:linear-gradient(rgba(0,0,0,.10),rgba(0,0,0,.035) 50%,rgba(0,0,0,0))"></div>
<svg class="abs" style="left:0;top:34px" width="6" height="6"><path d="M0 0 H6 A6 6 0 0 0 0 6 Z" fill="#d3e3fd"/></svg>
<svg class="abs" style="left:0;top:0" width="8" height="8"><path d="M0 0 H8 A8 8 0 0 0 0 8 Z" fill="#c4c6ca"/></svg>
<svg class="abs" style="left:1016px;top:0" width="8" height="8"><path d="M8 0 H0 A8 8 0 0 1 8 8 Z" fill="#c4c6ca"/></svg>
<svg class="abs" style="left:0;top:632px" width="8" height="8"><path d="M0 8 H8 A8 8 0 0 1 0 0 Z" fill="#a3a5a8"/></svg>
<svg class="abs" style="left:1016px;top:632px" width="8" height="8"><path d="M8 8 H0 A8 8 0 0 0 8 0 Z" fill="#a3a5a8"/></svg>
</body></html>
